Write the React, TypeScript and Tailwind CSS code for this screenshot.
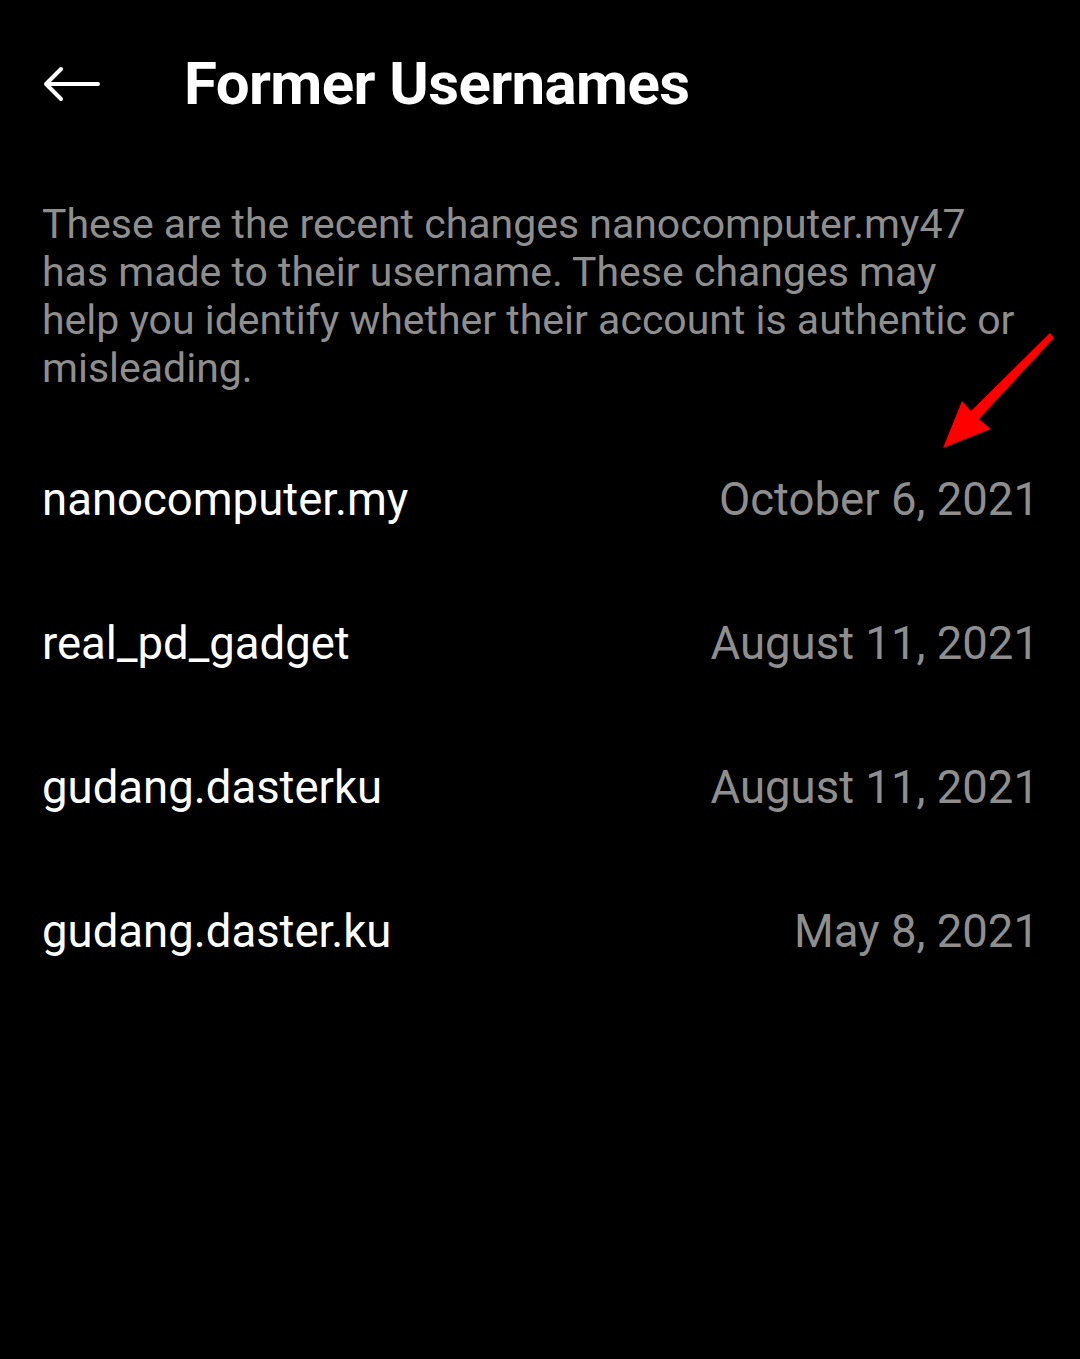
import React from "react";

const rows = [
  { name: "nanocomputer.my", date: "October 6, 2021" },
  { name: "real_pd_gadget", date: "August 11, 2021" },
  { name: "gudang.dasterku", date: "August 11, 2021" },
  { name: "gudang.daster.ku", date: "May 8, 2021" },
];

export default function App() {
  return (
    <div
      className="relative w-[1080px] h-[1359px] bg-black overflow-hidden"
      style={{ fontFamily: "Roboto, 'Noto Sans', sans-serif" }}
    >
      <div className="flex items-center h-[168px] pl-[42px]">
        <svg width="60" height="36" viewBox="0 0 60 36" className="mr-[82px]">
          <path
            d="M56 18H4M19 3L4 18L19 33"
            stroke="white"
            strokeWidth="4"
            fill="none"
            strokeLinecap="round"
            strokeLinejoin="round"
          />
        </svg>
        <h1 className="text-white font-bold text-[60px] leading-none tracking-[-0.6px]">
          Former Usernames
        </h1>
      </div>
      <p className="pl-[42px] pt-[32px] pr-[60px] text-[41px] leading-[48px] text-[#8e8e8e]">
        These are the recent changes nanocomputer.my47 has made to their username. These changes may help you identify whether their account is authentic or misleading.
      </p>
      <div className="flex flex-col pt-[36px]">
        {rows.map((r) => (
          <div
            key={r.name}
            className="flex items-center justify-between h-[144px] pl-[42px] pr-[41px]"
          >
            <span className="text-white text-[45.5px]">{r.name}</span>
            <span className="text-[#8e8e8e] text-[45.5px]">{r.date}</span>
          </div>
        ))}
      </div>
      <svg
        className="absolute left-0 top-0 pointer-events-none"
        width="1080"
        height="1359"
        viewBox="0 0 1080 1359"
      >
        <polygon
          points="943,448 962,401 971,411 1050,333 1054,338 979,419 991,429"
          fill="#ff0000"
        />
      </svg>
    </div>
  );
}
